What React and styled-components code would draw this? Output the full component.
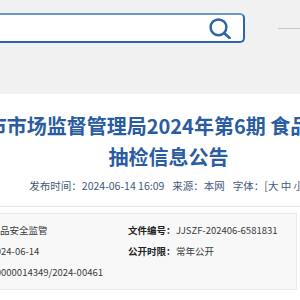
import React from 'react';
import styled, { createGlobalStyle } from 'styled-components';

const Global = createGlobalStyle`
  html, body { margin: 0; padding: 0; background: #fff; overflow: hidden; }
  body { font-family: "Microsoft YaHei", "Noto Sans CJK SC", "Noto Sans", sans-serif; }
`;

const Viewport = styled.div`
  width: 300px;
  height: 300px;
  overflow: hidden;
  background: #fff;
`;

const Header = styled.header`
  height: 94px;
  box-sizing: border-box;
  padding-top: 13px;
  background: #f1f1f1;
  display: flex;
  align-items: flex-start;
`;

const SearchBox = styled.div`
  flex: 0 0 auto;
  width: 290px;
  height: 30px;
  margin-left: -45px;
  box-sizing: border-box;
  background: #fff;
  border: 2px solid #2b66ad;
  border-top-color: #6d97c4;
  border-radius: 0 5px 5px 0;
  display: flex;
  align-items: center;
  justify-content: flex-end;
  padding-right: 12px;
`;

const Rule = styled.div`
  flex: 1;
  height: 1px;
  margin: 15px 0 0 33px;
  background: #c6c6c6;
`;

const Main = styled.main`
  padding-top: 16px;
  background: #fff;
`;

const Column = styled.div`
  width: 480px;
  margin-left: -71.5px;
  text-align: center;
`;

const Title = styled.h1`
  margin: 0;
  font-size: 20px;
  line-height: 31px;
  font-weight: 700;
  color: #2a5ca2;
  white-space: nowrap;
`;

const MetaBar = styled.div`
  padding: 4px 0 10px;
  border-bottom: 1px solid #e6e6e6;
`;

const Meta = styled.div`
  font-size: 10.5px;
  line-height: 20px;
  color: #44597a;
  white-space: nowrap;
`;

const MetaItem = styled.span`
  margin-left: ${(p) => (p.$first ? 0 : 8)}px;
`;

const InfoBox = styled.div`
  margin: 6px 0 0 -100px;
  width: 397px;
  box-sizing: border-box;
  padding: 6px 0 6px 41.5px;
  background: #f8f8f8;
  border: 1px solid #ebebeb;
  display: grid;
  grid-template-columns: 185.5px 1fr;
  grid-auto-rows: 21px;
  font-size: 9.5px;
  line-height: 21px;
  color: #3a3a3a;
  white-space: nowrap;
`;

const Cell = styled.div`
  display: flex;
`;

const Label = styled.span`
  flex: 0 0 48px;
  font-weight: 700;
  color: #222;
`;

const Value = styled.span``;

const SearchIcon = () => (
  <svg width="22" height="21" viewBox="0 0 22 21" fill="none">
    <circle cx="9.5" cy="9.3" r="7.9" stroke="#2b65ac" strokeWidth="2.5" />
    <line x1="15.3" y1="15.2" x2="20.6" y2="20" stroke="#2b65ac" strokeWidth="2.6" strokeLinecap="round" />
  </svg>
);

export default function App() {
  return (
    <Viewport>
      <Global />
      <Header>
        <SearchBox>
          <SearchIcon />
        </SearchBox>
        <Rule />
      </Header>
      <Main>
        <Column>
          <Title>
            晋江市市场监督管理局2024年第6期 食品安全监督
            <br />
            抽检信息公告
          </Title>
        </Column>
        <MetaBar>
          <Column>
            <Meta>
              <MetaItem $first>发布时间：2024-06-14 16:09</MetaItem>
              <MetaItem>来源：本网</MetaItem>
              <MetaItem>字体：[大 中 小]</MetaItem>
            </Meta>
          </Column>
        </MetaBar>
        <InfoBox>
          <Cell><Label>主题分类：</Label><Value>食品安全监管</Value></Cell>
          <Cell><Label>文件编号：</Label><Value>JJSZF-202406-6581831</Value></Cell>
          <Cell><Label>发文日期：</Label><Value>2024-06-14</Value></Cell>
          <Cell><Label>公开时限：</Label><Value>常年公开</Value></Cell>
          <Cell><Label>索引号：</Label><Value>30000014349/2024-00461</Value></Cell>
          <Cell />
        </InfoBox>
      </Main>
    </Viewport>
  );
}
